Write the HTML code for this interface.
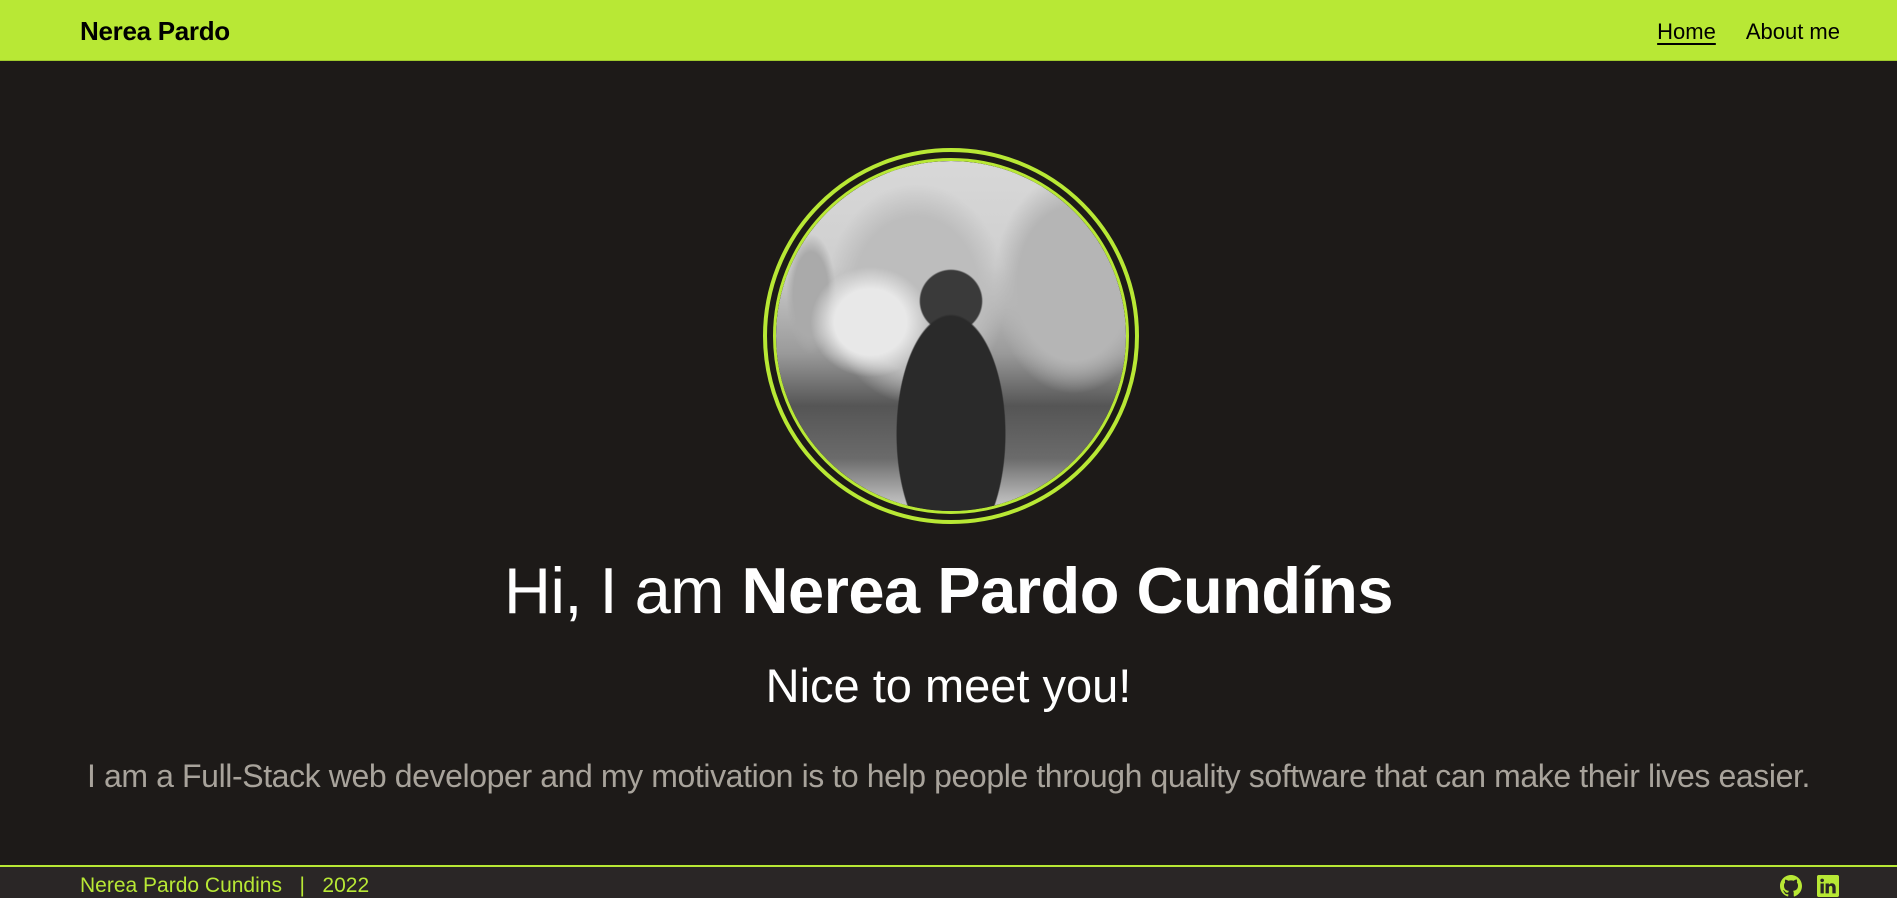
<!DOCTYPE html>
<html><head><meta charset="utf-8"><style>
*{margin:0;padding:0;box-sizing:border-box}
html,body{width:1897px;height:898px;overflow:hidden;background:#1d1a18;font-family:"Liberation Sans",sans-serif}
header{position:absolute;left:0;top:0;width:1897px;height:61px;background:#b8e835;border-bottom:1px solid #9fc92c}
.brand{position:absolute;left:80px;top:16px;font-size:26px;font-weight:bold;color:#000;letter-spacing:-0.3px}
nav{position:absolute;right:57px;top:19px;font-size:22px;color:#000}
nav a{color:#000;text-decoration:none;margin-left:30px}
nav a.u{text-decoration:underline;text-underline-offset:4px}
.ring{position:absolute;left:763px;top:148px;width:376px;height:376px;border-radius:50%;border:4px solid #b8e835;background:#1d1a18}
.ring2{position:absolute;left:6px;top:6px;right:6px;bottom:6px;border-radius:50%;border:3px solid #b8e835;overflow:hidden}
.photo{position:absolute;inset:0;border-radius:50%;background:
radial-gradient(ellipse 55px 120px at 50% 78%,#2a2a2a 0 98%,transparent 100%),
radial-gradient(circle 32px at 50% 40%,#3a3a3a 0 95%,transparent 100%),
radial-gradient(ellipse 60px 55px at 27% 46%,#e8e8e8 0 60%,transparent 100%),
radial-gradient(ellipse 90px 110px at 40% 38%,#bdbdbd 0 70%,transparent 100%),
radial-gradient(ellipse 80px 110px at 85% 35%,#b5b5b5 0 70%,transparent 100%),
radial-gradient(ellipse 25px 60px at 10% 38%,#aaa 0 70%,transparent 100%),
linear-gradient(#d8d8d8 0%,#cfcfcf 30%,#9a9a9a 55%,#555 70%,#6b6b6b 85%,#cfcfcf 100%)}
h1{position:absolute;left:0;width:1897px;top:553px;text-align:center;color:#fff;font-size:65px;font-weight:normal;letter-spacing:-0.5px}
h1 b{font-weight:bold}
h2{position:absolute;left:0;width:1897px;top:658px;text-align:center;color:#fff;font-size:47px;font-weight:normal}
p{position:absolute;left:0;width:1897px;top:758px;text-align:center;color:#a8a39b;font-size:32px;letter-spacing:-0.4px}
footer{position:absolute;left:0;top:865px;width:1897px;height:33px;background:#2a2626;border-top:2px solid #b8e835}
.ft{position:absolute;left:80px;top:7px;color:#b8e835;font-size:21px;white-space:pre}
.ic{position:absolute;top:8px}
</style></head><body>
<header><div class="brand">Nerea Pardo</div>
<nav><a class="u">Home</a><a>About me</a></nav></header>
<div class="ring"><div class="ring2"><div class="photo"></div></div></div>
<h1>Hi, I am <b>Nerea Pardo Cundíns</b></h1>
<h2>Nice to meet you!</h2>
<p>I am a Full-Stack web developer and my motivation is to help people through quality software that can make their lives easier.</p>
<footer><div class="ft">Nerea Pardo Cundins   |   2022</div>
<svg class="ic" style="left:1780px" width="22" height="22" viewBox="0 0 16 16"><path fill="#b8e835" d="M8 0C3.58 0 0 3.58 0 8c0 3.54 2.29 6.530 5.47 7.59.4.07.55-.17.55-.38v-1.33c-2.230.48-2.7-1.07-2.7-1.07-.36-.92-.89-1.17-.89-1.17-.73-.5.05-.49.05-.49.8.06 1.23.83 1.23.83.72 1.22 1.87.87 2.33.66.07-.52.28-.87.51-1.07-1.78-.2-3.64-.89-3.64-3.95 0-.87.31-1.59.82-2.15-.08-.2-.36-1.020.08-2.12 0 0 .67-.21 2.2.82A7.6 7.6 0 018 3.87c.68 0 1.36.09 2 .27 1.53-1.04 2.2-.82 2.2-.82.44 1.1.16 1.92.08 2.12.51.56.82 1.27.82 2.15 0 3.07-1.87 3.75-3.65 3.95.29.25.54.73.54 1.48v2.2c0 .21.15.46.55.38A8 8 0 0016 8c0-4.42-3.58-8-8-8z"/></svg>
<svg class="ic" style="left:1817px" width="22" height="22" viewBox="0 0 16 16"><path fill="#b8e835" d="M0 1.15C0 .52.52 0 1.18 0h13.64C15.48 0 16 .52 16 1.15v13.7c0 .63-.52 1.15-1.18 1.15H1.18C.52 16 0 15.48 0 14.85zM4.94 13.39V6.17H2.54v7.22zM3.74 5.18c.84 0 1.36-.55 1.36-1.25-.02-.71-.52-1.25-1.34-1.25S2.4 3.220 2.4 3.93c0 .7.52 1.25 1.32 1.25zm4.91 8.21V9.36c0-.22.02-.43.08-.59.17-.43.57-.88 1.23-.88.87 0 1.22.66 1.22 1.63v3.87h2.4V9.25c0-2.22-1.18-3.25-2.76-3.25-1.27 0-1.84.7-2.16 1.2V6.17H6.24c.03.68 0 7.220 0 7.22z"/></svg>
</footer>
</body></html>
